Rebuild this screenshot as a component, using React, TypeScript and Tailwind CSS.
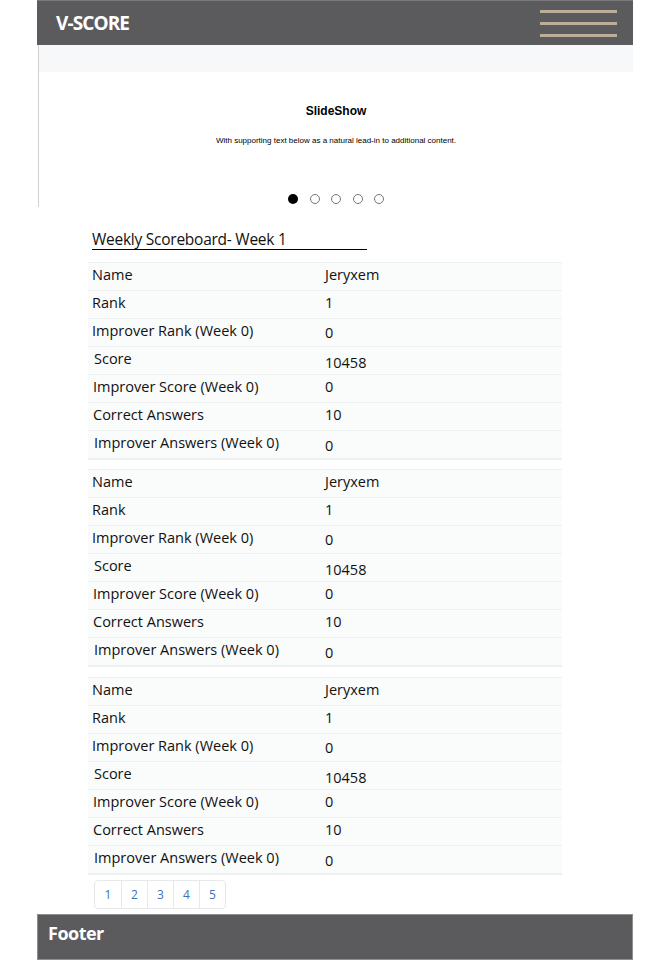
import React from 'react';

const rows = [
  { label: 'Name', value: 'Jeryxem', lx: '', vy: '' },
  { label: 'Rank', value: '1', lx: '', vy: '' },
  { label: 'Improver Rank (Week 0)', value: '0', lx: '', vy: 'pt-1' },
  { label: 'Score', value: '10458', lx: 'pl-1.5', vy: 'pt-2' },
  { label: 'Improver Score (Week 0)', value: '0', lx: 'pl-[5px]', vy: '' },
  { label: 'Correct Answers', value: '10', lx: 'pl-[5px]', vy: '' },
  { label: 'Improver Answers (Week 0)', value: '0', lx: 'pl-1.5', vy: 'pt-1.5' },
];

function ScoreTable() {
  return (
    <div className="border-b-2 border-[#eef0f0] bg-[#fafbfb]">
      {rows.map((r, i) => (
        <div key={i} className="flex h-[28px] border-t border-[#eef0f0]">
          <div className={`flex w-1/2 items-center pl-1 ${r.lx}`}>
            <span className="-mt-1">{r.label}</span>
          </div>
          <div className={`flex w-1/2 items-center ${r.vy}`}>
            <span className="-mt-1">{r.value}</span>
          </div>
        </div>
      ))}
    </div>
  );
}

export default function App() {
  const pages = ['1', '2', '3', '4', '5'];

  return (
    <div className="min-h-[960px] bg-white">
      <div className="ml-[37px] w-[596px]">
        {/* Header */}
        <header className="flex h-[45px] items-center justify-between border-t border-[#7a7a7c] bg-[#5b5b5d] pl-[19px] pr-4">
          <span className="font-['Open_Sans',sans-serif] text-[19px] font-bold tracking-[-0.9px] text-white">V-SCORE</span>
          <div className="flex flex-col gap-[9px]">
            <span className="block h-[3px] w-[77px] bg-[#bbaf98]" />
            <span className="block h-[3px] w-[77px] bg-[#bbaf98]" />
            <span className="block h-[3px] w-[77px] bg-[#bbaf98]" />
          </div>
        </header>

        {/* Slideshow */}
        <div className="ml-px border-l border-[#d0d0d0]">
          <div className="h-[27px] bg-[#f7f8fa]" />
          <div className="flex h-[135px] flex-col items-center font-['Liberation_Sans',Arial,sans-serif] text-black">
            <h2 className="mt-[32px] text-[12px] font-bold leading-[14px]">SlideShow</h2>
            <p className="mt-[18px] text-[8px] leading-[10px]">With supporting text below as a natural lead-in to additional content.</p>
            <div className="mt-[48px] flex gap-[11.5px]">
              <span className="block h-[10px] w-[10px] rounded-full bg-black" />
              <span className="block h-[10px] w-[10px] rounded-full border border-[#777]" />
              <span className="block h-[10px] w-[10px] rounded-full border border-[#777]" />
              <span className="block h-[10px] w-[10px] rounded-full border border-[#777]" />
              <span className="block h-[10px] w-[10px] rounded-full border border-[#777]" />
            </div>
          </div>
        </div>

        {/* Scoreboard */}
        <div className="ml-[51px] w-[474px] font-['Open_Sans',sans-serif] text-[14.5px] text-[#111]">
          <h3 className="ml-1 mt-[23px] w-[275px] border-b border-black text-[15.5px] leading-[19px] tracking-[-0.25px]">
            Weekly Scoreboard- Week 1
          </h3>
          <div className="mt-[12px]">
            <ScoreTable />
          </div>
          <div className="mt-[9px]">
            <ScoreTable />
          </div>
          <div className="mt-[10px]">
            <ScoreTable />
          </div>

          {/* Pagination */}
          <div className="ml-[6px] mt-[5px] flex w-fit rounded border border-[#e6e8ea]">
            {pages.map((p, i) => (
              <span
                key={p}
                className={`flex h-[27px] w-[26px] items-center justify-center text-[12px] text-[#3b72b8] ${i > 0 ? 'border-l border-[#e6e8ea]' : ''}`}
              >
                {p}
              </span>
            ))}
          </div>
        </div>

        {/* Footer */}
        <footer className="mt-[5px] flex h-[46px] items-center border border-[#8e8e90] bg-[#5b5b5d] pl-[10px]">
          <span className="-mt-2 font-['Open_Sans',sans-serif] text-[18px] font-bold tracking-[-0.5px] text-white">Footer</span>
        </footer>
      </div>
    </div>
  );
}
